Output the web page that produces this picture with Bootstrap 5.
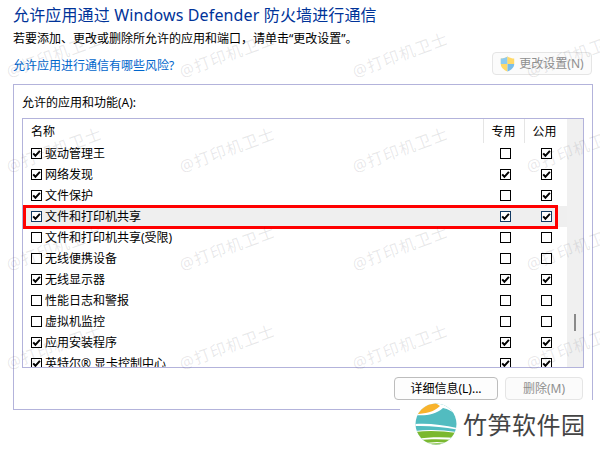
<!DOCTYPE html>
<html lang="zh-CN">
<head>
  <meta charset="UTF-8" />
  <title>允许应用通过 Windows Defender 防火墙进行通信</title>
  <link href="https://cdn.jsdelivr.net/npm/bootstrap@5.3.2/dist/css/bootstrap.min.css" rel="stylesheet"/>
  <style>
    html, body { height: 450px; overflow: hidden; }
    body {
      position: relative;
      background: #fff;
      color: #000;
      font-family: "Noto Sans", "Noto Sans CJK SC", sans-serif;
      font-size: 12px;
      line-height: 16px;
    }
    .fw-window { width: 580px; margin-left: 13px; }
    .fw-title { height: 32px; padding-top: 3px; margin: 0; color: #003399; font-size: 16px; line-height: 24px; font-weight: 400; font-family: inherit; letter-spacing: .14px; }
    .fw-intro { height: 21px; line-height: 14px; }
    .fw-linkrow { height: 31px; }
    .fw-link { color: #0066cc; text-decoration: none; margin-top: 5px; }
    .fw-btn {
      height: 23px; padding: 0; font-size: 12px; line-height: 21px;
      border-radius: 4px; background: #fdfdfd; border: 1px solid #bdbdbd; color: #000;
    }
    .fw-btn:disabled { opacity: 1; background: #fbfbfb; border-color: #e5e5e5; color: #8f8f8f; }
    .fw-btn-settings { width: 100px; margin-right: 1px; margin-top: -1px; }
    .fw-btn-details { width: 104px; }
    .fw-btn-remove { width: 78px; margin-left: 7px; margin-right: 1px; }
    .fw-box { height: 326px; border: 1px solid #b3b3db; padding: 0 8px; }
    .fw-boxlabel { height: 33px; padding-top: 10px; }
    .fw-list { height: 250px; width: 562px; border: 1px solid #b3b3db; overflow: hidden; }
    .fw-rows { width: 544px; }
    .fw-head { height: 24px; }
    .fw-head-name { width: 460px; padding-left: 8px; padding-top: 5px; }
    .fw-head-col { width: 41px; border-left: 1px solid #e5e5e5; text-align: center; padding-top: 5px; padding-right: 1px; }
    .fw-row { height: 21px; position: relative; }
    .fw-row-sel { background: #efefef; }
    .fw-name { width: 460px; padding-left: 8px; display: flex; align-items: center; gap: 3px; }
    .fw-cell { width: 41px; display: flex; justify-content: center; align-items: center; padding-left: 3px; }
    .fw-check {
      appearance: none; width: 11px; height: 11px; margin: 0; flex: none;
      border: 1px solid #000; border-radius: 0; background: #fff no-repeat center;
    }
    .fw-check:checked {
      background-image: url("data:image/svg+xml,%3Csvg xmlns='http://www.w3.org/2000/svg' viewBox='0 0 9 9'%3E%3Cpath d='M1.200 4.400 3.400 6.800 7.900 1.800' fill='none' stroke='%23000' stroke-width='2'/%3E%3C/svg%3E");
    }
    .fw-row-sel .fw-check { border-color: #123a63; }
    .fw-red { position: absolute; left: 0; top: -1px; width: 535px; height: 24px; border: 3px solid #f00; pointer-events: none; }
    .fw-scroll { width: 16px; background: #f0f0f0; position: relative; }
    .fw-thumb { position: absolute; left: 7px; top: 195px; width: 2px; height: 17px; background: #8a8a8a; }
    .fw-actions { padding-top: 9px; }
    .fw-mark {
      position: absolute; color: rgba(70, 70, 80, .12); font-size: 16px; line-height: 20px;
      white-space: nowrap; letter-spacing: 1px; transform: rotate(-20deg); transform-origin: left center; pointer-events: none;
    }
    .fw-brand {
      position: absolute; left: 400px; top: 400px; width: 200px; height: 50px; background: #fff;
      padding-left: 15px; gap: 6px;
    }
    .fw-brand-name { color: #444; font-size: 24px; line-height: 48px; letter-spacing: .5px; font-weight: 400; white-space: nowrap; }
  </style>
</head>
<body>
  <div class="fw-window" id="win">
    <h1 class="fw-title">允许应用通过 Windows Defender 防火墙进行通信</h1>
    <div class="fw-intro">若要添加、更改或删除所允许的应用和端口，请单击“更改设置”。</div>
    <div class="fw-linkrow d-flex justify-content-between align-items-start">
      <a class="fw-link" href="#">允许应用进行通信有哪些风险?</a>
      <button type="button" class="btn fw-btn fw-btn-settings d-flex align-items-center justify-content-center" disabled>
        <svg width="15" height="16" viewBox="0 0 15 16" class="me-1 flex-shrink-0">
          <path d="M7.500 .5C5.500 2 3 2.600 .8 2.600V8c0 3.400 3 6 6.700 7.500V8Z" fill="#ffd968"/>
          <path d="M7.500 .5V8H.8V2.600C3 2.600 5.500 2 7.500 .5Z" fill="#8ccbf0"/>
          <path d="M7.500 .5c2 1.500 4.500 2.100 6.700 2.100V8H7.500Z" fill="#ffd968"/>
          <path d="M7.500 8h6.700c0 3.400-3 6-6.700 7.500Z" fill="#79bde8"/>
        </svg>更改设置(N)
      </button>
    </div>
    <div class="fw-box">
      <div class="fw-boxlabel">允许的应用和功能(A):</div>
      <div class="fw-list d-flex">
        <div class="fw-rows flex-shrink-0">
          <div class="fw-head d-flex">
            <div class="fw-head-name">名称</div>
            <div class="fw-head-col">专用</div>
            <div class="fw-head-col">公用</div>
          </div>
          <div id="rows"></div>
        </div>
        <div class="fw-scroll ms-auto"><div class="fw-thumb"></div></div>
      </div>
      <div class="fw-actions d-flex justify-content-end">
        <button type="button" class="btn fw-btn fw-btn-details">详细信息(L)...</button>
        <button type="button" class="btn fw-btn fw-btn-remove" disabled>删除(M)</button>
      </div>
    </div>
  </div>

  <div id="marks"></div>

  <div class="fw-brand d-flex align-items-center">
    <svg width="42" height="44" viewBox="0 0 42 44" class="flex-shrink-0">
      <defs><clipPath id="disc"><circle cx="21" cy="21" r="20.500"/></clipPath></defs>
      <g clip-path="url(#disc)">
        <rect width="42" height="44" fill="#52bcc0"/>
        <path d="M0 0H42V12C38 9 33 6 28 5 20 12 10 13 0 12Z" fill="#fff"/>
        <path d="M0 11C10 11 19 9 25 3L19 -1 5 2Z" fill="#f8b32c"/>
        <path d="M0 21C14 20 28 22 42 25V26.500C28 24 14 22.500 0 23Z" fill="#fff"/>
        <path d="M0 28C14 26 28 27 42 29V44H0Z" fill="#fff"/>
        <path d="M0 29C14 27 28 28 42 30V35C28 34 14 34 0 36Z" fill="#7ab82f"/>
        <path d="M4 37C14 36 28 36 40 37L34 40 22 39 9 40Z" fill="#7ab82f"/>
        <path d="M12 41C18 40 26 40 31 41L21 44Z" fill="#7ab82f"/>
      </g>
    </svg>
    <span class="fw-brand-name">竹笋软件园</span>
  </div>

  <script>
    // [名称, 名称勾选, 专用, 公用]
    const rows = [
      ['驱动管理王', 1, 0, 1],
      ['网络发现', 1, 1, 1],
      ['文件保护', 1, 0, 1],
      ['文件和打印机共享', 1, 1, 1],
      ['文件和打印机共享(受限)', 0, 0, 0],
      ['无线便携设备', 0, 0, 0],
      ['无线显示器', 1, 1, 1],
      ['性能日志和警报', 0, 0, 0],
      ['虚拟机监控', 0, 0, 0],
      ['应用安装程序', 1, 1, 1],
      ['英特尔® 显卡控制中心', 1, 1, 1]
    ];
    const check = (on) => `<input class="fw-check" type="checkbox" ${on ? 'checked' : ''} tabindex="-1">`;
    document.getElementById('rows').innerHTML = rows.map((r, i) => `
      <div class="fw-row d-flex ${i === 3 ? 'fw-row-sel' : ''}">
        <label class="fw-name">${check(r[1])}<span>${r[0]}</span></label>
        <div class="fw-cell">${check(r[2])}</div>
        <div class="fw-cell">${check(r[3])}</div>
        ${i === 3 ? '<div class="fw-red"></div>' : ''}
      </div>`).join('');

    // 水印
    let marks = '';
    [62, 157, 255, 354].forEach(y => {
      [7, 180, 353, 527].forEach(x => {
        marks += `<div class="fw-mark" style="left:${x}px;top:${y}px">@打印机卫士</div>`;
      });
    });
    document.getElementById('marks').innerHTML = marks;
  </script>
  <script src="https://cdn.jsdelivr.net/npm/bootstrap@5.3.2/dist/js/bootstrap.bundle.min.js"></script>
</body>
</html>
